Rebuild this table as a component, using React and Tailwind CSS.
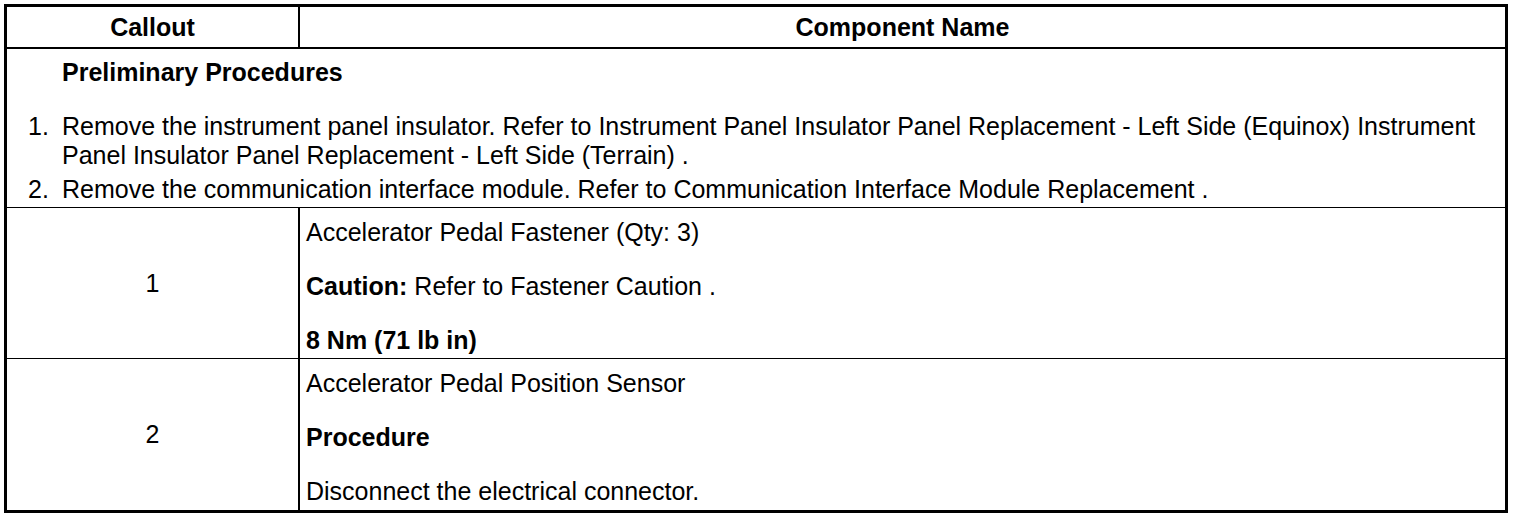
import React from 'react';

const steps = [
    'Remove the instrument panel insulator. Refer to Instrument Panel Insulator Panel Replacement - Left Side (Equinox) Instrument Panel Insulator Panel Replacement - Left Side (Terrain) .',
    'Remove the communication interface module. Refer to Communication Interface Module Replacement .',
];

const Row = ({ callout, children, last }) => (
    <div className={`flex h-[151px] ${last ? '' : 'border-b border-black'}`}>
        <div className="w-[293px] shrink-0 border-r-2 border-black flex items-center justify-center">
            {callout}
        </div>
        <div className="flex-1 pl-[6px] pt-[10px] flex flex-col gap-[25px]">
            {children}
        </div>
    </div>
);

const App = () => {
    return (
        <div className="bg-white w-[1520px] h-[520px] p-1 text-black text-[25px] leading-[29px] font-['Liberation_Sans',Arial,sans-serif]">
            <div className="w-[1504px] border-[3px] border-black">
                <div className="flex h-[42px] border-b-2 border-black font-bold">
                    <div className="w-[293px] shrink-0 border-r-2 border-black flex items-center justify-center">Callout</div>
                    <div className="flex-1 flex items-center justify-center">Component Name</div>
                </div>

                <div className="border-b border-black pt-[9px] pb-[5px] h-[159px]">
                    <div className="pl-[55px] font-bold">Preliminary Procedures</div>
                    <ol className="mt-[25px] flex flex-col gap-[5px]">
                        {steps.map((s, i) => (
                            <li key={i} className="flex">
                                <span className="w-[55px] shrink-0 pl-[21px]">{i + 1}.</span>
                                <span className="pr-5">{s}</span>
                            </li>
                        ))}
                    </ol>
                </div>

                <Row callout="1">
                    <p>Accelerator Pedal Fastener (Qty: 3)</p>
                    <p><b>Caution:</b> Refer to Fastener Caution .</p>
                    <p className="font-bold">8 Nm (71 lb in)</p>
                </Row>

                <Row callout="2" last>
                    <p>Accelerator Pedal Position Sensor</p>
                    <p className="font-bold">Procedure</p>
                    <p>Disconnect the electrical connector.</p>
                </Row>
            </div>
        </div>
    );
};

export default App;
